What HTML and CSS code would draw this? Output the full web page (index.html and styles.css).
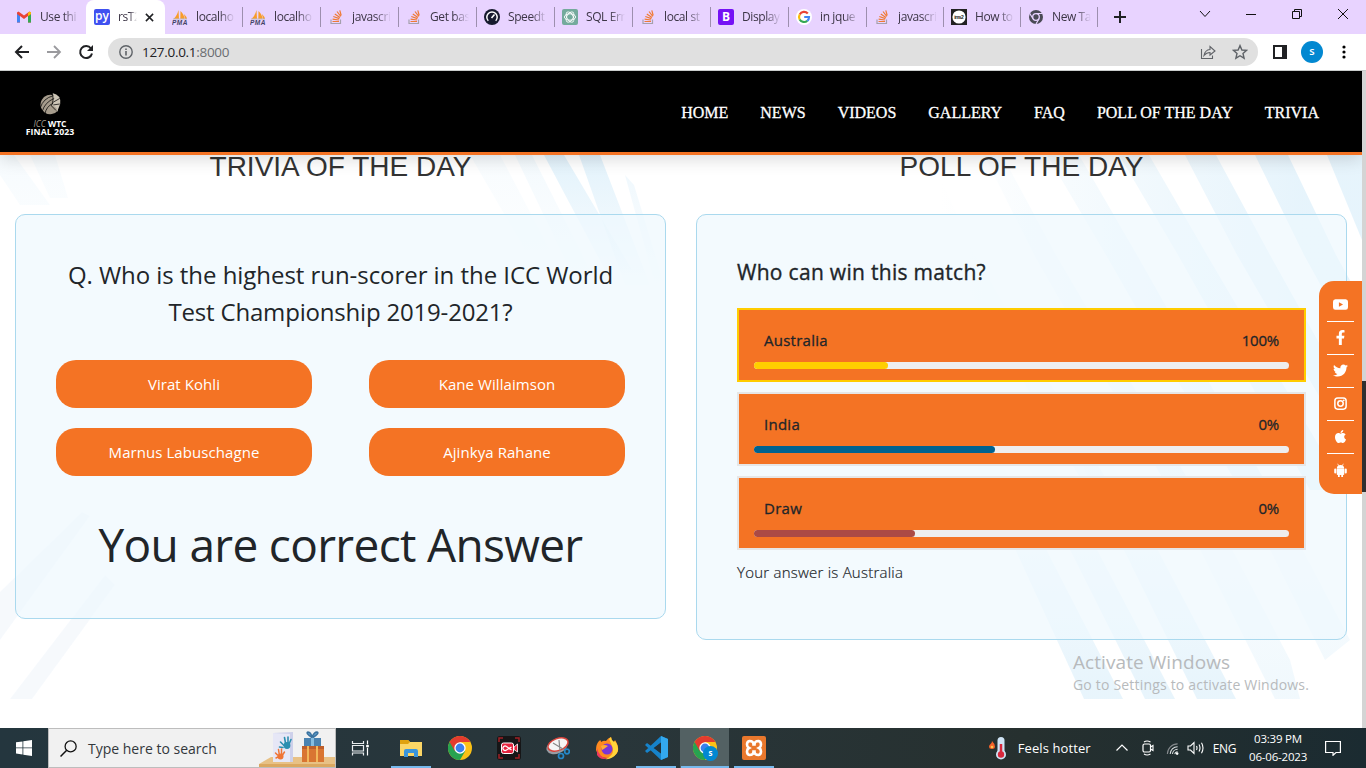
FILE: index.html
```html
<!DOCTYPE html>
<html lang="en">
<head>
<meta charset="utf-8">
<title>ICC WTC Final 2023</title>
<link rel="stylesheet" href="styles.css">
</head>
<body>
<svg class="defs" width="0" height="0" aria-hidden="true">
  <symbol id="so" viewBox="0 0 16 16"><path d="M3 10.500V14.500H12.500V10.500" fill="none" stroke="#a5a0ad" stroke-width="1.200"/><path d="M4.500 12.500H11M4.600 10.200 11 11M5.300 7.500 11.400 9.600M6.800 4.900 12 8.500M9 2.500 12.800 7.400M11.800 1.400 13.200 6.500" stroke="#ef7a35" stroke-width="1.200"/></symbol>
  <symbol id="pma" viewBox="0 0 16 16"><path d="M6.500 1 7 10H1.500Q5 7 6.500 1M8.500 2Q12 5 12.500 10H8.300ZM12 5Q15 8 15 10H13Z" fill="#f89c2b"/><path d="M1 10H15" stroke="#b9bac8"/><text x="0" y="15.500" font-family="Liberation Sans" font-style="italic" font-weight="700" font-size="6.500" textLength="15.500" fill="#434366">PMA</text></symbol>
  <symbol id="chrome" viewBox="0 0 24 24"><circle cx="12" cy="12" r="12" fill="#fbc116"/><path d="M12 12 1.600 6A12 12 0 0 0 12 24L17.200 15Z" fill="#27a350"/><path d="M1.600 6A12 12 0 0 1 22.400 6H12L6.800 15Z" fill="#e33b2e"/><circle cx="12" cy="12" r="5.700" fill="#fff"/><circle cx="12" cy="12" r="4.400" fill="#3b80ee"/></symbol>
</svg>

<div class="tabstrip">
  <div class="tab first"><svg viewBox="0 0 16 16"><path d="M1 3.500V13.500H4V7L8 10 12 7V13.500H15V3.500L13.500 2.500 8 6.500 2.500 2.500Z" fill="#ea4335"/><path d="M1 5V13.500H4V7.200Z" fill="#4285f4"/><path d="M12 7.200V13.500H15V5Z" fill="#34a853"/><path d="M12 4V7.200L15 5V3.500Q14 2 12 4" fill="#fbbc04"/></svg><span>Use thi</span></div>
  <div class="tab active"><b class="py">py</b><span class="short">rsT2</span><svg class="close" viewBox="0 0 10 10"><path d="M1 1 9 9M9 1 1 9" stroke="#202124" stroke-width="1.700"/></svg></div>
  <div class="tab"><svg><use href="#pma"/></svg><span>localho</span></div>
  <div class="tab"><svg><use href="#pma"/></svg><span>localho</span></div>
  <div class="tab"><svg><use href="#so"/></svg><span>javascri</span></div>
  <div class="tab"><svg><use href="#so"/></svg><span>Get bas</span></div>
  <div class="tab"><svg viewBox="0 0 16 16"><circle cx="8" cy="8" r="8" fill="#171a2e"/><path d="M4.300 11.800A5.200 5.200 0 1 1 11.700 11.800" fill="none" stroke="#fff" stroke-width="1.500"/><path d="M7.500 9 10.500 5.500" stroke="#fff" stroke-width="1.600"/></svg><span>Speedt</span></div>
  <div class="tab"><svg viewBox="0 0 16 16"><rect width="16" height="16" rx="2" fill="#74aa9c"/><g fill="none" stroke="#fff" stroke-width=".9"><ellipse cx="8" cy="8" rx="5.600" ry="3.200"/><ellipse cx="8" cy="8" rx="5.600" ry="3.200" transform="rotate(60 8 8)"/><ellipse cx="8" cy="8" rx="5.600" ry="3.200" transform="rotate(120 8 8)"/></g></svg><span>SQL Err</span></div>
  <div class="tab"><svg><use href="#so"/></svg><span>local st</span></div>
  <div class="tab"><b class="bs">B</b><span>Display</span></div>
  <div class="tab"><svg viewBox="0 0 16 16"><circle cx="8" cy="8" r="8" fill="#fff"/><g fill="none" stroke-width="2.200"><path d="M11.800 4.600A5 5 0 0 0 3.700 5.500" stroke="#ea4335"/><path d="M3.700 5.500A5 5 0 0 0 3.700 10.500" stroke="#fbbc05"/><path d="M3.700 10.500A5 5 0 0 0 11.300 11.800" stroke="#34a853"/><path d="M11.300 11.800A5 5 0 0 0 13 8H8.200" stroke="#4285f4"/></g></svg><span>in jque</span></div>
  <div class="tab n"><svg><use href="#so"/></svg><span>javascri</span></div>
  <div class="tab n"><svg viewBox="0 0 16 16"><rect width="16" height="16" fill="#222"/><circle cx="8" cy="8" r="6.600" fill="#fff"/><text x="3.200" y="10" font-size="5" font-weight="700" font-family="Liberation Sans" textLength="9.600" fill="#222">ims2</text></svg><span>How to</span></div>
  <div class="tab n"><svg viewBox="0 0 16 16"><circle cx="8" cy="8" r="7" fill="#4a4a55"/><circle cx="8" cy="8" r="3.300" fill="#4a4a55" stroke="#e8d3ff" stroke-width="1.300"/><path d="M8 4.500H14.500M5 9.800 1.800 4.500M11 9.800 8 15" stroke="#e8d3ff" stroke-width="1.200"/></svg><span>New Ta</span></div>
  <svg class="plus" viewBox="0 0 12 12"><path d="M6 0V12M0 6H12" stroke="#202124" stroke-width="2"/></svg>
  <div class="winctl">
    <svg viewBox="0 0 12 12"><path d="M1 3 6 8.500 11 3" fill="none" stroke="#111"/></svg>
    <svg viewBox="0 0 12 12"><path d="M1 6.500H11" stroke="#111"/></svg>
    <svg viewBox="0 0 12 12"><path d="M1.500 3.500H8.500V10.500H1.500ZM3.500 3.500V1.500H10.500V8.500H8.500" fill="none" stroke="#111"/></svg>
    <svg viewBox="0 0 12 12"><path d="M1 1 11 11M11 1 1 11" stroke="#111"/></svg>
  </div>
</div>

<div class="toolbar">
  <svg class="nv" viewBox="0 0 16 16"><path d="M15 8H2M8 2 2 8 8 14" fill="none" stroke="#202124" stroke-width="2"/></svg>
  <svg class="nv" viewBox="0 0 16 16"><path d="M1 8H14M8 2 14 8 8 14" fill="none" stroke="#9a9a9e" stroke-width="1.800"/></svg>
  <svg class="nv" viewBox="0 0 16 16"><path d="M13 4.500A6 6 0 1 0 14 9.500" fill="none" stroke="#202124" stroke-width="2"/><path d="M15 1V7H9Z" fill="#202124"/></svg>
  <div class="omni">
    <svg class="info" viewBox="0 0 16 16"><circle cx="8" cy="8" r="6.200" fill="none" stroke="#5f6368" stroke-width="1.400"/><path d="M8 7V11.500M8 4.400V6" stroke="#5f6368" stroke-width="1.600"/></svg>
    <span class="url">127.0.0.1<i>:8000</i></span>
    <svg class="share" viewBox="0 0 16 16"><path d="M1.500 5V14.500H12.500V11.500M4 11.500Q5 6 10 5.500V2.500L15 7 10 11V8.500Q6.500 8.500 4 11.500Z" fill="none" stroke="#606368" stroke-width="1.100"/></svg>
    <svg class="star" viewBox="0 0 16 16"><path d="M8 1.600 9.900 6 14.600 6.400 11 9.500 12.100 14.200 8 11.700 3.900 14.200 5 9.500 1.400 6.400 6.100 6Z" fill="none" stroke="#5f6368" stroke-width="1.400"/></svg>
  </div>
  <svg class="side" viewBox="0 0 14 14"><path d="M1 1H13V13H1Z" fill="none" stroke="#202124" stroke-width="2"/><path d="M9 0H14V14H9Z" fill="#202124"/></svg>
  <span class="avatar">s</span>
  <svg class="dots" viewBox="0 0 4 14"><circle cx="2" cy="2" r="1.600"/><circle cx="2" cy="7" r="1.600"/><circle cx="2" cy="12" r="1.600"/></svg>
</div>

<div class="viewport">
  <div class="page">
    <svg class="rays" viewBox="0 71 1362 657" aria-hidden="true">
      <defs>
        <linearGradient id="fr" gradientUnits="userSpaceOnUse" x1="940" y1="0" x2="1300" y2="0"><stop offset="0" stop-color="#d9eefa" stop-opacity="0"/><stop offset="1" stop-color="#d9eefa" stop-opacity=".65"/></linearGradient>
        <linearGradient id="fb" gradientUnits="userSpaceOnUse" x1="0" y1="430" x2="0" y2="680"><stop offset="0" stop-color="#d9eefa" stop-opacity="0"/><stop offset="1" stop-color="#d9eefa" stop-opacity=".6"/></linearGradient>
        <linearGradient id="fl" gradientUnits="userSpaceOnUse" x1="0" y1="155" x2="0" y2="300"><stop offset="0" stop-color="#d9eefa" stop-opacity=".75"/><stop offset="1" stop-color="#d9eefa" stop-opacity="0"/></linearGradient>
      </defs>
      <g fill="url(#fr)">
        <path d="M905 155H930L975 255 1130 520H1105L948 255Z"/>
        <path d="M984 155H1002L1056 255 1200 500H1175L1034 255Z"/>
        <path d="M1047 155H1079L1137 255 1270 490H1240L1106 255Z"/>
        <path d="M1119 155H1149L1207 255 1345 490H1310L1178 255Z"/>
        <path d="M1185 155H1216L1270 255 1362 420V470L1237 255Z"/>
        <path d="M1255 155H1288L1336 255 1362 302V360L1304 255Z"/>
        <path d="M1327 155H1362V240Z"/>
      </g>
      <g fill="url(#fb)">
        <path d="M965 440H990L1123 699H1084Z"/>
        <path d="M1020 450H1045L1175 699H1145Z"/>
        <path d="M1070 440H1100L1236 699H1197Z"/>
        <path d="M1145 440H1175L1290 660 1300 699H1275Z" opacity=".6"/>
        <path d="M1215 440H1245L1350 640 1325 660Z" opacity=".6"/>
      </g>
      <g fill="url(#fl)">
        <path d="M470 155H500L550 250H525Z" opacity=".25"/>
        <path d="M515 155H532L590 270H570Z" opacity=".4"/>
        <path d="M544 155H564L632 270H605Z"/>
        <path d="M579 155H600L650 285H625Z"/>
        <path d="M625 175 634 185 672 310H662Z" opacity=".6"/>
        <path d="M0 155H14L50 205H20L0 175Z" opacity=".3"/>
        <path d="M30 155H55L68 198H50Z" opacity=".25"/>
      </g>
      <g fill="#eef4fb" opacity=".5">
        <path d="M0 592 82 512 90 516 0 640Z"/>
        <path d="M10 699H32L115 585 105 575Z"/>
      </g>
    </svg>

    <header class="site">
      <div class="logo">
        <svg viewBox="0 0 24 26"><path d="M16 4A10.500 10.500 0 1 0 20 20L14 12Z" fill="#a69c8c"/><path d="M14 1Q24 3 22.500 13L19 22Q20 17 13 14 16 9 14 1Z" fill="#cdc5b6"/><path d="M1 17Q4 7 15 4M3 21Q6 11 16 7M6 24Q7 16 15 12M14 1Q16 10 13 15L18 20M15 11 22 7M15 14 22 13" fill="none" stroke="#000" stroke-width=".8"/></svg>
        <div class="l1"><i>ICC</i> WTC</div>
        <div class="l2">FINAL 2023</div>
      </div>
      <nav><a>HOME</a><a>NEWS</a><a>VIDEOS</a><a>GALLERY</a><a>FAQ</a><a>POLL OF THE DAY</a><a>TRIVIA</a></nav>
    </header>

    <main class="cols">
      <section class="col">
        <h2>TRIVIA OF THE DAY</h2>
        <div class="card trivia">
          <p class="q">Q. Who is the highest run-scorer in the ICC World<br><span class="q2">Test Championship 2019-2021?</span></p>
          <div class="opts">
            <button>Virat Kohli</button><button>Kane Willaimson</button>
            <button>Marnus Labuschagne</button><button>Ajinkya Rahane</button>
          </div>
          <p class="result">You are correct Answer</p>
        </div>
      </section>
      <section class="col">
        <h2>POLL OF THE DAY</h2>
        <div class="card poll">
          <h3>Who can win this match?</h3>
          <div class="choice picked"><div class="row"><span>Australia</span><span class="pct">100%</span></div><div class="bar"><div class="fill y" style="width:25%"></div></div></div>
          <div class="choice"><div class="row"><span>India</span><span class="pct">0%</span></div><div class="bar"><div class="fill b" style="width:45%"></div></div></div>
          <div class="choice"><div class="row"><span>Draw</span><span class="pct">0%</span></div><div class="bar"><div class="fill r" style="width:30%"></div></div></div>
          <p class="yours">Your answer is Australia</p>
        </div>
      </section>
    </main>

    <aside class="social">
      <a><svg viewBox="0 0 16 16"><path d="M2.500 2.300H13.500Q16 2.300 16 5V11Q16 13.700 13.500 13.700H2.500Q0 13.700 0 11V5Q0 2.300 2.500 2.300M6.300 5.500V10.500L10.700 8Z" fill="#fff" fill-rule="evenodd"/></svg></a>
      <a><svg viewBox="0 0 320 512"><path d="M279.140 288l14.220-92.660h-88.910v-60.130c0-25.350 12.420-50.060 52.240-50.060h40.420V6.260S260.430 0 225.360 0c-73.220 0-121.080 44.380-121.080 124.720v70.620H22.890V288h81.390v224h100.170V288z" fill="#fff"/></svg></a>
      <a><svg viewBox="0 0 512 512"><path d="M459.370 151.716c.325 4.548.325 9.097.325 13.645 0 138.720-105.583 298.558-298.558 298.558-59.452 0-114.680-17.219-161.137-47.106 8.447.974 16.568 1.299 25.340 1.299 49.055 0 94.213-16.568 130.274-44.832-46.132-.975-84.792-31.188-98.112-72.772 6.498.974 12.995 1.624 19.818 1.624 9.421 0 18.843-1.300 27.614-3.573-48.081-9.747-84.143-51.980-84.143-102.985v-1.299c13.969 7.797 30.214 12.670 47.431 13.319-28.264-18.843-46.781-51.005-46.781-87.391 0-19.492 5.197-37.360 14.294-52.954 51.655 63.675 129.300 105.258 216.365 109.807-1.624-7.797-2.599-15.918-2.599-24.040 0-57.828 46.782-104.934 104.934-104.934 30.213 0 57.502 12.670 76.670 33.137 23.715-4.548 46.456-13.320 66.599-25.340-7.798 24.366-24.366 44.833-46.132 57.827 21.117-2.273 41.584-8.122 60.426-16.243-14.292 20.791-32.161 39.308-52.628 54.253z" fill="#fff"/></svg></a>
      <a><svg viewBox="0 0 16 16"><rect x="2" y="2" width="12" height="12" rx="3" fill="none" stroke="#fff" stroke-width="1.600"/><circle cx="8" cy="8" r="2.900" fill="none" stroke="#fff" stroke-width="1.600"/><circle cx="11.500" cy="4.500" r=".9" fill="#fff"/></svg></a>
      <a><svg viewBox="0 0 384 512"><path d="M318.700 268.700c-.2-36.700 16.400-64.400 50-84.800-18.800-26.900-47.200-41.700-84.700-44.600-35.500-2.800-74.300 20.700-88.500 20.700-15 0-49.400-19.700-76.400-19.700C63.300 141.200 4 184.800 4 273.500q0 39.300 14.400 81.200c12.800 36.700 59 126.700 107.200 125.200 25.200-.6 43-17.900 75.800-17.900 31.800 0 48.300 17.900 76.400 17.900 48.600-.7 90.400-82.500 102.600-119.300-65.200-30.700-61.700-90-61.700-91.900zm-56.600-164.200c27.300-32.400 24.800-61.900 24-72.500-24.100 1.400-52 16.400-67.900 34.900-17.500 19.800-27.800 44.300-25.600 71.900 26.100 2 49.900-11.400 69.500-34.300z" fill="#fff"/></svg></a>
      <a><svg viewBox="0 0 16 16"><path d="M4 5.800Q4.300 2.200 8 2.200 11.700 2.200 12 5.800ZM4 6H12V12Q12 12.800 11 12.800H5Q4 12.800 4 12ZM1.300 7Q1.300 5.800 2.400 5.800 3.500 5.800 3.500 7V10Q3.500 11.200 2.400 11.200 1.300 11.200 1.300 10ZM12.500 7Q12.500 5.800 13.600 5.800 14.700 5.800 14.700 7V10Q14.700 11.200 13.600 11.200 12.500 11.200 12.500 10ZM5.300 12H7.200V15H5.300ZM8.800 12H10.700V15H8.800Z" fill="#fff"/><path d="M5 .8 6 2.800M11 .8 10 2.800" stroke="#fff" stroke-width=".8"/></svg></a>
    </aside>

    <div class="watermark"><div class="w1">Activate Windows</div><div class="w2">Go to Settings to activate Windows.</div></div>
  </div>
  <div class="scroll"><div class="thumb"></div></div>
</div>

<div class="taskbar">
  <div class="start"><svg viewBox="0 0 16 16"><path d="M0 2.300 6.500 1.400V7.500H0ZM7.300 1.300 16 0V7.500H7.300ZM0 8.300H6.500V14.500L0 13.600ZM7.300 8.300H16V16L7.300 14.700Z" fill="#fff"/></svg></div>
  <div class="search">
    <svg class="mag" viewBox="0 0 16 16"><circle cx="10" cy="6" r="5.200" fill="none" stroke="#111" stroke-width="1.200"/><path d="M6.300 9.700.5 15.500" stroke="#111" stroke-width="1.400"/></svg>
    <span>Type here to search</span>
    <svg class="gift" viewBox="0 0 76 38"><path d="M0 35 12 28H76V38H0Z" fill="#e8c185"/><path d="M0 35H76V38H0Z" fill="#dba860"/><path d="M14 4 34 3V33H14Z" fill="#cdd0ea"/><path d="M14 4 31 5V33H14Z" fill="#e6e7f6"/><path d="M21.500 13 25 16.500M25.500 8.500 26.500 14M29 8V14M32 10.500 30 15M24 18.500 20.500 18" stroke="#2b8fb0" stroke-width="1.600" stroke-linecap="round"/><circle cx="28" cy="16.500" r="3.400" fill="#2b8fb0"/><path d="M16.500 24 18.500 26M19.500 20.500 20.200 25M22.500 20V25M25.500 23 23.500 26M17 29 19 28" stroke="#ef7434" stroke-width="1.500" stroke-linecap="round"/><circle cx="21.500" cy="27.500" r="3" fill="#ef7434"/><rect x="45" y="9" width="17" height="9" fill="#4a83b1"/><path d="M53 8.500Q46 4 49 3 52 3 53 8.500 55 3 58 3 61 4 54 8.500" fill="#5f9cc9" stroke="#3a729f" stroke-width="1.500"/><path d="M53.500 9V17" stroke="#86bde0" stroke-width="3"/><rect x="43" y="17" width="22" height="16" fill="#d97532"/><path d="M43 17H65V20H43Z" fill="#bd5e2b"/><path d="M49 17V33M58 17V33" stroke="#f2b75a" stroke-width="2"/></svg>
  </div>
  <div class="app view"><svg class="s18" viewBox="0 0 18 18"><path d="M1.500 2V4.500H12.500V2M1.500 16.500V14H12.500V16.500M1.500 6.500H12.500V12H1.500Z" fill="none" stroke="#e8ecee" stroke-width="1.200"/><path d="M16.500 1.500V5M16.500 9V16.500" stroke="#fff" stroke-width="1.200"/><circle cx="16.500" cy="7" r="1.500" fill="#fff"/></svg></div>
  <div class="app open"><svg viewBox="0 0 24 24"><path d="M1 4H9L11 6H23V20H1Z" fill="#fbd666"/><path d="M1 4H9L11 6 9 8H1Z" fill="#e0a20e"/><path d="M5 20V15Q5 13 7 13H17Q19 13 19 15V21H15V17H9V21H5Z" fill="#3a95dc"/></svg></div>
  <div class="app"><svg><use href="#chrome"/></svg></div>
  <div class="app"><svg viewBox="0 0 24 24"><rect width="24" height="24" rx="3" fill="#161617"/><path d="M2 6V2H6M18 2H22V6M2 18V22H6M18 22H22V18" fill="none" stroke="#a02026" stroke-width="1.500"/><rect x="4.500" y="7" width="12" height="10.500" rx="2" fill="#e5233d" stroke="#fff"/><path d="M17 11 20.500 8V16L17 13.500Z" fill="#e5233d" stroke="#fff" stroke-width=".8"/><path d="M14.500 14 9.500 10.500A2.200 2.200 0 1 0 9.500 14L14.500 11" fill="none" stroke="#fff" stroke-width="1.200"/></svg></div>
  <div class="app"><svg viewBox="0 0 24 24"><ellipse cx="11" cy="10.500" rx="11" ry="7" transform="rotate(-22 11 10.500)" fill="#999ca3"/><ellipse cx="12" cy="8.500" rx="10.500" ry="6" transform="rotate(-20 12 8.500)" fill="#f5f5f5" stroke="#d9443c" stroke-width="1.500"/><path d="M13 4 14 15M7 7 17 13" stroke="#888" stroke-width="1.200"/><circle cx="15" cy="20" r="2.500" fill="none" stroke="#2588c9" stroke-width="1.700"/><circle cx="21" cy="15.500" r="2.300" fill="none" stroke="#2588c9" stroke-width="1.700"/></svg></div>
  <div class="app"><svg viewBox="0 0 24 24"><path d="M4 5Q6 3 6 6 9 4 11 5 13 2 16 1 16 4 19 6 20 4 20 4 24 10 23 15A11.300 9.800 0 0 1 1 14Q1 8 4 5Z" fill="#ff8a1f"/><path d="M14 3Q16 1 16 1 16 4 19 6L20 5Q25 12 22 17 17 24 10 23 21 19 17 10Q16 7 14 3" fill="#ffd43a"/><path d="M2 12Q4 22 13 22 6 25 2 19Z" fill="#ef3a5c"/><circle cx="12" cy="13" r="5.500" fill="#7b35d6"/><path d="M6 10Q9 8 13 10 9 13 7 14Z" fill="#ffad32"/></svg></div>
  <div class="app open"><svg viewBox="0 0 24 24"><path d="M17 0 24 3V21L17 24 1 9 3 7 18 18V6L3 17 1 15Z" fill="#1683cb"/><path d="M17 0 24 3V21L17 24Z" fill="#33a8ee"/><path d="M17 6.500V17.500L10 12Z" fill="#22323a"/></svg></div>
  <div class="app open current"><svg><use href="#chrome"/></svg><b class="mini">s</b></div>
  <div class="app open"><svg viewBox="0 0 24 24"><rect width="24" height="24" rx="2" fill="#e9782d"/><path d="M7.500 5Q11.500 5 11.500 8.500H12.500Q12.500 5 16.500 5 19 5.500 19 8.500 19 11 17 12 19 13 19 15.500 19 18.500 16.500 19 12.500 19 12.500 15.500H11.500Q11.500 19 7.500 19 5 18.500 5 15.500 5 13 7 12 5 11 5 8.500 5 5.500 7.500 5Z" fill="none" stroke="#fff" stroke-width="2.600"/></svg></div>
  <div class="tray">
    <svg class="hot" viewBox="0 0 20 24"><path d="M4 5Q7 8 7 10.500 7 13 4 13 1 13 1 10.500 1 9 2.500 8 4 7 4 5" fill="#f4622a"/><circle cx="4" cy="11" r="1.300" fill="#ffc34a"/><rect x="9.500" y="1" width="7" height="18" rx="3.500" fill="#cfe4f5"/><circle cx="13" cy="18.500" r="5" fill="#cfe4f5"/><path d="M13 8V18" stroke="#d8283c" stroke-width="2.500"/><circle cx="13" cy="18.500" r="3.200" fill="#d8283c"/></svg>
    <span class="feels">Feels hotter</span>
    <svg class="chev" viewBox="0 0 12 12"><path d="M.5 8.500 6 3 11.500 8.500" fill="none" stroke="#fff" stroke-width="1.200"/></svg>
    <svg class="meet" viewBox="0 0 14 16"><rect x="2" y="4" width="7.500" height="8" rx="1.500" fill="none" stroke="#fff" stroke-width="1.200"/><path d="M9.500 7 12 5.500V10.500L9.500 9M3 2Q6 0 9.500 2M3 14Q6 16 9.500 14" fill="none" stroke="#fff" stroke-width="1.100"/></svg>
    <svg class="wifi" viewBox="0 0 14 14"><path d="M1.500 13A11 11 0 0 1 12.500 2" fill="none" stroke="#84898c" stroke-width="1.200"/><path d="M4.500 13A8 8 0 0 1 12.500 5M7 13A5.500 5.500 0 0 1 12.500 7.800M9.500 13A3 3 0 0 1 12.500 10.500" fill="none" stroke="#dfe3e5" stroke-width="1.100"/><circle cx="12" cy="12.500" r="1.400" fill="#fff"/></svg>
    <svg class="vol" viewBox="0 0 18 14"><path d="M1 5H3.500L7 1.500V12.500L3.500 9H1Z" fill="none" stroke="#fff" stroke-width="1.100"/><path d="M9.500 5Q10.500 7 9.500 9M12 3.500Q14 7 12 10.500M14.500 1.800Q17.500 7 14.500 12.200" fill="none" stroke="#fff" stroke-width="1.100"/></svg>
    <span class="eng">ENG</span>
    <div class="clock"><span>03:39 PM</span><span>06-06-2023</span></div>
    <svg class="note" viewBox="0 0 16 16"><path d="M.6 1.500H15.400V12.500H11L8 15.300V12.500H.6Z" fill="none" stroke="#fff" stroke-width="1.200"/></svg>
  </div>
</div>
</body>
</html>
```

FILE: styles.css
```css
* { box-sizing: border-box; }
body { margin: 0; width: 1366px; height: 768px; overflow: hidden; background: #fff; color: #212529; font-family: "Open Sans", "Noto Sans", sans-serif; display: flex; flex-direction: column; }
p, h2, h3 { margin: 0; font-weight: 400; }
svg { display: block; flex: none; }
.defs { position: absolute; }

/* Browser tabs */
.tabstrip { height: 34px; flex: none; background: #e8d3ff; display: flex; padding-left: 9px; }
.tab { width: 78px; flex: none; height: 34px; display: flex; align-items: center; padding-left: 7px; gap: 8px; background: linear-gradient(#9d8fae, #9d8fae) right 0 top 7px / 1px 20px no-repeat; }
.tab.n { width: 77px; }
.tab > svg, .tab > b { width: 16px; height: 16px; flex: none; }
.tab span { width: 39px; white-space: nowrap; font-size: 12px; line-height: 18px; letter-spacing: -.4px; color: #3c3546; -webkit-mask-image: linear-gradient(90deg, #000 60%, transparent); mask-image: linear-gradient(90deg, #000 60%, transparent); }
.tab.first { width: 77px; background: none; }
.tab.active { width: 79px; background: #fff; border-radius: 8px 8px 0 0; padding-left: 8px; }
.tab.active .short { width: 19px; }
.tab.active .close { width: 9px; height: 9px; }
.py { background: #3f51f0; color: #fff; border-radius: 2px; font-size: 12px; line-height: 13px; text-align: center; font-weight: 600; }
.bs { background: #7512f5; color: #fff; border-radius: 2px; font-size: 12px; line-height: 16px; text-align: center; }
.plus { width: 12px; height: 12px; margin: 11px 0 0 16px; }
.winctl { margin-left: auto; display: flex; gap: 34px; padding: 8px 17px 0 0; }
.winctl svg { width: 12px; height: 12px; }

/* Address bar */
.toolbar { height: 37px; flex: none; background: #fff; border-bottom: 1px solid #c9cccb; display: flex; align-items: center; padding-left: 14px; }
.nv { width: 16px; height: 16px; margin-right: 16px; }
.omni { width: 1150px; height: 28px; border-radius: 14px; background: #e0e0e0; display: flex; align-items: center; margin-left: -2px; padding: 0 10px; }
.info { width: 16px; height: 16px; margin-right: 8px; }
.url { font-size: 13.500px; letter-spacing: -.3px; color: #202124; margin-right: auto; }
.url i { font-style: normal; color: #6a6d71; }
.share { width: 16px; height: 16px; margin-right: 16px; }
.star { width: 16px; height: 16px; }
.side { width: 14px; height: 14px; margin-left: 15px; }
.avatar { width: 22px; height: 22px; border-radius: 50%; background: #0288d1; color: #fff; font-size: 11px; line-height: 20px; text-align: center; margin-left: 14px; font-weight: 600; }
.dots { width: 4px; height: 14px; margin-left: 19px; }

/* Page */
.viewport { height: 657px; flex: none; display: flex; }
.page { width: 1362px; position: relative; overflow: hidden; }
.scroll { width: 4px; background: #d4d4d4; padding-top: 310px; }
.thumb { height: 111px; background: #303030; }
.rays { position: absolute; left: 0; top: 0; width: 1362px; height: 657px; }
.site { position: relative; z-index: 2; height: 84px; background: #000; border-bottom: 3px solid #f47324; box-shadow: 0 4px 16px rgba(0, 0, 0, .15); display: flex; justify-content: space-between; align-items: center; padding: 3px 43px 0 25px; }
.logo { width: 50px; color: #fff; font-weight: 700; font-size: 8.500px; line-height: 8px; text-align: center; padding-top: 2px; white-space: nowrap; }
.logo svg { width: 23px; height: 24px; margin: 0 auto 4px; }
.logo i { color: #a69c8c; font-weight: 400; }
.l2 { font-size: 8.700px; letter-spacing: .1px; }
.site nav { display: flex; gap: 32px; font: 16px "Liberation Serif", serif; color: #fff; -webkit-text-stroke: .3px #fff; }

.cols { position: relative; display: flex; height: 573px; }
.col { width: 681px; padding: 0 15px; }
.col h2 { height: 58px; line-height: 32px; margin: -4px 0 5px; font-family: "Liberation Sans", sans-serif; font-size: 28px; color: #333; text-align: center; white-space: nowrap; }
.card { border: 1px solid #aad9ee; border-radius: 10px; background: rgba(238, 247, 253, .68); padding: 40px; }
.trivia { height: 405px; text-align: center; }
.q { font-size: 24px; line-height: 37px; padding-top: 1px; letter-spacing: -.05px; white-space: nowrap; }
.q2 { letter-spacing: -.19px; }
.opts { display: grid; grid-template-columns: 256px 256px; justify-content: space-between; gap: 20px; margin-top: 30px; }
.opts button { height: 48px; border: 0; border-radius: 20px; background: #f47324; color: #fff; font: 15px "Open Sans", sans-serif; letter-spacing: .07px; padding: 0; }
.result { font-size: 46px; line-height: 60px; margin-top: 38px; letter-spacing: -.67px; white-space: nowrap; }
.poll { height: 426px; }
.poll h3 { font-size: 21px; line-height: 28px; letter-spacing: .3px; -webkit-text-stroke: .35px #212529; padding-top: 3px; margin-bottom: 22px; }
.choice { height: 74px; border: 2px solid #e6e6e6; background: #f47324; padding: 18px 15px 0; margin-bottom: 10px; font-size: 15px; letter-spacing: .26px; -webkit-text-stroke: .3px #212529; }
.choice.picked { border-color: #ffcc00; }
.pct { letter-spacing: -.2px; }
.row { display: flex; justify-content: space-between; padding: 0 10px; line-height: 24px; height: 34px; }
.bar { height: 7px; border-radius: 4px; background: #eee; }
.fill { height: 7px; border-radius: 4px; }
.y { background: #ffcf00; }
.b { background: #00628f; }
.r { background: #ab4a45; }
.yours { font-size: 15px; line-height: 24px; font-weight: 300; letter-spacing: .23px; -webkit-text-stroke: .2px #212529; }

.social { position: absolute; z-index: 3; right: 0; top: 210px; width: 43px; height: 213px; background: #f47324; border-radius: 15px 0 0 15px; padding: 8px 8px 0; }
.social a { display: flex; width: 27px; height: 33px; align-items: center; justify-content: center; padding-bottom: 2px; border-bottom: 1px solid #fff; }
.social a:last-child { border: 0; padding: 0; }
.social svg { width: 15px; height: 15px; }

.watermark { position: absolute; left: 1073px; top: 578px; color: #b7babc; white-space: nowrap; }
.w1 { font-size: 19px; line-height: 26px; letter-spacing: .07px; }
.w2 { font-size: 14px; line-height: 20px; letter-spacing: .19px; }

/* Taskbar */
.taskbar { height: 40px; flex: none; background: linear-gradient(90deg, #24363e, #29363a 45%, #26302f 75%, #1b2b31); display: flex; color: #fff; }
.start { width: 48px; padding: 12px 16px; }
.start svg { width: 16px; height: 16px; }
.search { width: 288px; background: #f1f1f1; border: 1px solid #bdbdbd; color: #33383c; display: flex; align-items: center; font-size: 14px; padding-left: 11px; }
.mag { width: 17px; height: 17px; margin-right: 11px; }
.gift { width: 76px; height: 38px; margin-left: auto; }
.app { width: 49px; display: flex; justify-content: center; align-items: center; position: relative; }
.app.view { width: 50px; padding-right: 2px; }
.app > svg { width: 24px; height: 24px; }
.app > .s18 { width: 18px; height: 18px; }
.app.open { background: linear-gradient(#76b9ed, #76b9ed) center bottom / 40px 2px no-repeat; }
.app.current { background: linear-gradient(#76b9ed, #76b9ed) center bottom / 48px 2px no-repeat, #536163; }
.mini { position: absolute; left: 23px; top: 18px; width: 15px; height: 15px; border-radius: 50%; background: #0288d1; font-size: 8px; line-height: 14px; text-align: center; }
.tray { margin-left: auto; display: flex; align-items: center; font-size: 13px; padding-right: 25px; white-space: nowrap; }
.hot { width: 20px; height: 24px; margin-right: 10px; }
.feels { letter-spacing: .1px; }
.chev { width: 12px; height: 12px; margin: 0 13px 0 25px; }
.meet { width: 14px; height: 16px; margin-right: 11px; }
.wifi { width: 13px; height: 13px; margin-right: 8px; }
.vol { width: 18px; height: 14px; margin-right: 8px; }
.eng { font-size: 12px; letter-spacing: -.4px; margin-right: 13px; }
.clock { width: 58px; font-size: 11.500px; line-height: 18px; letter-spacing: -.2px; display: flex; flex-direction: column; align-items: center; margin-right: 18px; }
.note { width: 16px; height: 16px; }
```
